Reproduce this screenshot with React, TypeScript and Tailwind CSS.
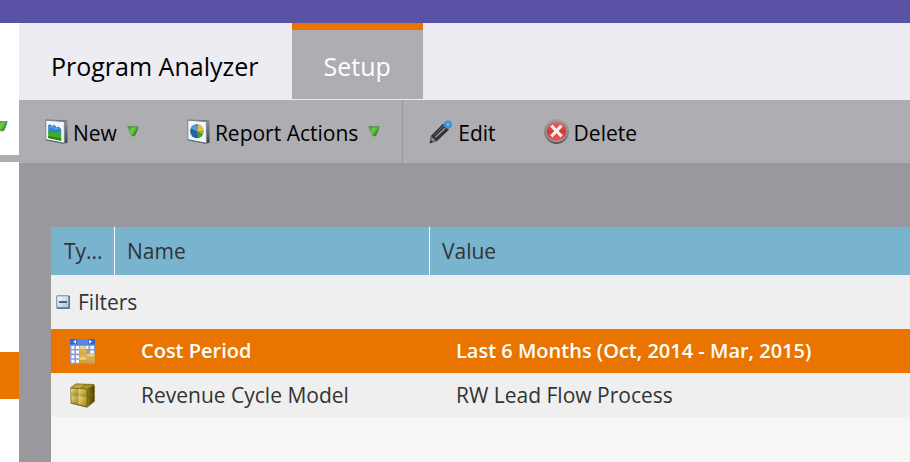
import { useState } from "react";
import type { ReactNode } from "react";
import { clsx } from "clsx";

const rows = [
  {
    id: "cost",
    icon: <CalendarIcon />,
    name: "Cost Period",
    value: "Last 6 Months (Oct, 2014 - Mar, 2015)",
  },
  {
    id: "model",
    icon: <CubeIcon />,
    name: "Revenue Cycle Model",
    value: "RW Lead Flow Process",
  },
];

function Caret() {
  return (
    <svg viewBox="0 0 12 11" className="h-[11px] w-3 shrink-0" aria-hidden="true">
      <defs>
        <linearGradient id="caret" x1="0" y1="0" x2="1" y2="0.6">
          <stop offset="0" stopColor="#2f8f16" />
          <stop offset="0.5" stopColor="#6fd04a" />
          <stop offset="1" stopColor="#23790f" />
        </linearGradient>
      </defs>
      <path d="M.6.6h10.8L7.4 10H4.6z" fill="url(#caret)" stroke="#5f9a52" strokeWidth="0.6" />
      <path d="M1.2.8h9.6" stroke="#4a8a3c" strokeWidth="0.8" />
      <path d="M6.4 9.4 8 9 10.6 2.4" fill="none" stroke="#2b6a1b" strokeWidth="0.7" />
    </svg>
  );
}

function PanelFrame({ children }: { children: ReactNode }) {
  return (
    <svg viewBox="0 0 23 25" className="h-[25px] w-[23px] shrink-0" aria-hidden="true">
      <defs>
        <linearGradient id="panel-side" x1="0" y1="0" x2="0" y2="1">
          <stop offset="0" stopColor="#8795a0" />
          <stop offset="1" stopColor="#36444f" />
        </linearGradient>
      </defs>
      <path d="M19 2.5 22.5 1.2v22.6L19 24.6z" fill="url(#panel-side)" />
      <path d="M.5.5 22.5 1.2 19 3 1 1.8z" fill="#66747e" />
      <path d="M.8 1.2 19.4 2.6v21.8L.8 20.8z" fill="#f3f6f8" stroke="#7b8992" strokeWidth="1" />
      <path d="M1 20.9 19.2 24.4" stroke="#55646e" strokeWidth="1" />
      {children}
    </svg>
  );
}

function ChartIcon() {
  return (
    <PanelFrame>
      <path d="M3.2 6 5.4 5.2 7 7.2 9.2 5.4 11.4 8.6 13.8 7.6 16.2 10.4v4H3.2z" fill="#2f80cf" />
      <path d="M4.2 7.8 6.4 9 8 7.8 10 10.4 13 9.4" fill="none" stroke="#72b6ee" strokeWidth="1" />
      <path d="M3.2 11.6 5.4 13.2 8 12 10.8 14.6 13.4 11.8 16.2 14.2v7.6L3.2 19z" fill="#3fae25" />
      <path d="M3.2 17 16.2 19.4v2.4L3.2 19z" fill="#23850f" />
    </PanelFrame>
  );
}

function PieIcon() {
  return (
    <PanelFrame>
      <ellipse cx="9.8" cy="12.2" rx="6.6" ry="7" fill="#25649f" />
      <path d="M9.8 12.2V6A6.6 6.6 0 0 0 4.4 9.4z" fill="#5b9fd4" />
      <path d="M10 12.2 11 5.2a6.9 6.9 0 0 1 5.6 7z" fill="#e0c33f" />
      <path d="M9.8 12.2h6.6a6.6 7 0 0 1-5.4 6.9z" fill="#4d9c2b" />
      <path d="M9.8 12.2h6.6L15.9 15z" fill="#a8bf35" />
    </PanelFrame>
  );
}

function PencilIcon() {
  return (
    <svg viewBox="0 0 24 24" className="size-6 shrink-0" aria-hidden="true">
      <path d="M.8 23.2 2 15.8 14 3.8 20 9.8 8 21z" fill="#323234" />
      <path d="M.8 23.2 2 15.8 7.8 21.2z" fill="#66666a" />
      <path d="M5 15.4 15.4 5.2" stroke="#59595c" strokeWidth="1.2" />
      <path d="M6.4 17.4 16 8.2" stroke="#a4a4a8" strokeWidth="1.3" />
      <path d="M2.6 18.4 5 20.6" stroke="#a9a9ad" strokeWidth="1.2" />
      <path d="M.8 23.2 1.4 20.4 3.4 22.4z" fill="#222224" />
      <circle cx="19" cy="4.6" r="4.1" fill="#3a96d8" />
      <circle cx="19" cy="4.4" r="1.4" fill="#69b7ea" />
    </svg>
  );
}

function DeleteIcon() {
  return (
    <svg viewBox="0 0 25 25" className="size-[25px] shrink-0" aria-hidden="true">
      <defs>
        <linearGradient id="delete-ring" x1="0" y1="0" x2="0" y2="1">
          <stop offset="0" stopColor="#a0a2a5" />
          <stop offset="0.6" stopColor="#7d8486" />
          <stop offset="1" stopColor="#48585a" />
        </linearGradient>
        <linearGradient id="delete-fill" x1="0" y1="0" x2="0" y2="1">
          <stop offset="0" stopColor="#d9716d" />
          <stop offset="0.5" stopColor="#d33a37" />
          <stop offset="1" stopColor="#e4605a" />
        </linearGradient>
      </defs>
      <circle cx="12.5" cy="12.5" r="12.4" fill="url(#delete-ring)" />
      <circle cx="12.5" cy="12.3" r="10.8" fill="#98a3a3" />
      <circle cx="12.5" cy="12.3" r="10" fill="url(#delete-fill)" />
      <path d="M7.4 6.6 17.6 17.4M17.4 6.6 7.4 17.4" stroke="#fbeeee" strokeWidth="3.1" />
    </svg>
  );
}

function CalendarIcon() {
  return (
    <svg viewBox="0 0 25 25" className="size-[25px]" aria-hidden="true">
      <path d="M0 0h25v25H0z" fill="#8b9ccb" />
      <path d="M0 0h25v5.6H0z" fill="#2f66dc" />
      <path d="M7 0h11v5.6H7z" fill="#5686ea" />
      <path d="M6 .8v4L3 2.8zM19 .8v4l3-2z" fill="#eef4ff" />
      <path
        d="M1.4 7h3v3h-3zM6 7h3v3H6zM10.6 7h3v3h-3zM15.4 7h3v3h-3zM20.4 7h3.4v3h-3.4zM1.4 11.6h3v3h-3zM6 11.6h3v3H6zM20.4 11.6h3.4v3h-3.4zM1.4 16.2h3v3h-3zM6 16.2h3v3H6zM1.4 20.8h3v3h-3zM6 20.8h3v3H6z"
        fill="#fff"
      />
      <path d="M9.2 8.6h7.4v10H9.2z" fill="#d9a945" />
      <ellipse cx="12.9" cy="8.8" rx="3.8" ry="1.6" fill="#f0cf80" />
      <path d="M16.6 15.6H25v8h-8.4z" fill="#d9a640" />
      <ellipse cx="20.8" cy="16" rx="4.2" ry="1.8" fill="#efcb74" />
      <path d="M9 19.4h7.8V25H9z" fill="#cc942f" />
      <ellipse cx="12.9" cy="19.4" rx="4" ry="1.9" fill="#edc873" />
      <path d="M9.4 12.6h7.2M9.4 15.8h7.2M16.6 20H25M9 22.6h7.8" stroke="#e0b65c" strokeWidth="0.8" />
    </svg>
  );
}

function CubeIcon() {
  return (
    <svg viewBox="0 0 25 25" className="size-[25px]" aria-hidden="true">
      <defs>
        <linearGradient id="cube-front" x1="0" y1="0" x2="1" y2="1">
          <stop offset="0" stopColor="#e8da86" />
          <stop offset="0.6" stopColor="#bca536" />
          <stop offset="1" stopColor="#9c8416" />
        </linearGradient>
        <linearGradient id="cube-side" x1="0" y1="0" x2="1" y2="0">
          <stop offset="0" stopColor="#8f7914" />
          <stop offset="1" stopColor="#4e420a" />
        </linearGradient>
      </defs>
      <path d="M.4 4.6 6 .5 23.8 1 24.8 3v15.6L17 24.8.6 20.4z" fill="#78671a" />
      <path d="M1.4 4.4 6.4 1.2 14.6 1.4 10 5.2z" fill="#bda93c" />
      <path d="M11 5.2 15.4 1.4 23.4 1.8 17.2 6z" fill="#a89224" />
      <path d="M1 5.4 8.2 5.9v6.7L1 11.8z" fill="url(#cube-front)" />
      <path d="M9 6 16.6 6.7v6.9L9 12.7z" fill="url(#cube-front)" />
      <path d="M1.2 12.9 8.2 13.7v7.5l-6.8-1.7z" fill="url(#cube-front)" />
      <path d="M9 13.8 16.6 14.8v8.8L9 21.5z" fill="url(#cube-front)" />
      <path d="M17.6 6.8 24 2.8v7.4l-6.4 3.6z" fill="url(#cube-side)" />
      <path d="M17.6 15 24 11.4v6.8l-6.4 5.2z" fill="url(#cube-side)" />
      <path d="M8.6 5.9v15.2M1.2 12.3 16.8 14.2" stroke="#e3d893" strokeWidth="0.7" />
    </svg>
  );
}

function CollapseIcon() {
  return (
    <svg viewBox="0 0 14 14" className="size-3.5 shrink-0" aria-hidden="true">
      <defs>
        <linearGradient id="collapse" x1="0" y1="0" x2="1" y2="1">
          <stop offset="0" stopColor="#ffffff" />
          <stop offset="1" stopColor="#a9b9cf" />
        </linearGradient>
      </defs>
      <rect x="0.7" y="0.7" width="12.6" height="12.6" rx="1.4" fill="url(#collapse)" stroke="#8ba3c4" strokeWidth="1.4" />
      <path d="M1 13.2h12.2V1" fill="none" stroke="#4a6388" strokeWidth="1.2" />
      <path d="M3 7h8" stroke="#223a5e" strokeWidth="1.5" />
    </svg>
  );
}

function Sidebar() {
  return (
    <aside className="flex w-[19px] shrink-0 flex-col overflow-hidden bg-white">
      <div className="flex h-[139px] justify-end border-b-7 border-[#aeadb2] pt-[98px] pr-[11px]">
        <button type="button" aria-label="Expand menu" className="h-[11px]">
          <Caret />
        </button>
      </div>
      <div className="mt-[190px] h-[47px] bg-[#e97500]" />
    </aside>
  );
}

type ToolbarButtonProps = {
  icon: ReactNode;
  label: string;
  menu?: boolean;
};

function ToolbarButton({ icon, label, menu }: ToolbarButtonProps) {
  return (
    <button type="button" className="flex items-center gap-[10px]">
      <span className="flex items-center gap-[5px]">
        {icon}
        <span className="pt-1">{label}</span>
      </span>
      {menu && <Caret />}
    </button>
  );
}

function Toolbar() {
  return (
    <div className="flex h-[63px] shrink-0 items-stretch bg-[#aeadb2] text-[21px] whitespace-nowrap text-black">
      <div className="flex gap-12 border-r border-[#99989d] pr-[22px] pl-[26px]">
        <ToolbarButton icon={<ChartIcon />} label="New" menu />
        <ToolbarButton icon={<PieIcon />} label="Report Actions" menu />
      </div>
      <div className="flex gap-12 pl-[26px]">
        <ToolbarButton icon={<PencilIcon />} label="Edit" />
        <ToolbarButton icon={<DeleteIcon />} label="Delete" />
      </div>
    </div>
  );
}

function SettingsTable() {
  const [selected, setSelected] = useState("cost");
  const [open, setOpen] = useState(true);

  return (
    <table className="w-full table-fixed border-separate border-spacing-0 text-left text-[21px] leading-7 whitespace-nowrap text-[#333]">
      <colgroup>
        <col className="w-16" />
        <col className="w-[315px]" />
        <col />
      </colgroup>
      <thead>
        <tr className="h-12 bg-[#79b4cf]">
          <th className="border-r border-white p-0 pl-[13px] font-normal">Ty...</th>
          <th className="border-r border-white p-0 pl-3 font-normal">Name</th>
          <th className="p-0 pl-3 font-normal">Value</th>
        </tr>
      </thead>
      <tbody>
        <tr className="h-[54px] bg-[#efefef]">
          <td colSpan={3} className="p-0 pl-[5px]">
            <button
              type="button"
              aria-expanded={open}
              onClick={() => setOpen(!open)}
              className="flex items-center gap-2"
            >
              <CollapseIcon />
              Filters
            </button>
          </td>
        </tr>
        {open &&
          rows.map((row) => (
            <tr
              key={row.id}
              onClick={() => setSelected(row.id)}
              className={clsx(
                "h-[44px]",
                selected === row.id
                  ? "bg-[#e97500] text-[20px] font-semibold text-white"
                  : "bg-[#efefef]",
              )}
            >
              <td className="p-0 pl-[19px]">{row.icon}</td>
              <td className="p-0 pl-[26px]">{row.name}</td>
              <td className="p-0 pl-[26px]">{row.value}</td>
            </tr>
          ))}
      </tbody>
    </table>
  );
}

export default function App() {
  return (
    <div className="flex min-h-screen flex-col overflow-hidden bg-white font-['Open_Sans',sans-serif]">
      <header className="h-[23px] shrink-0 bg-[#5a52a5]" />
      <div className="flex flex-1">
        <Sidebar />
        <main className="flex min-w-0 flex-1 flex-col bg-[#99989d]">
          <div
            role="tablist"
            className="flex h-[77px] shrink-0 bg-[#edecf2] pb-px text-[25px] whitespace-nowrap"
          >
            <button
              type="button"
              role="tab"
              aria-selected="false"
              className="border-t-7 border-transparent pt-1 pr-[34px] pl-8 text-black"
            >
              Program Analyzer
            </button>
            <button
              type="button"
              role="tab"
              aria-selected="true"
              className="border-t-7 border-[#e97500] bg-[#aeadb2] pt-1 pr-8 pl-[31px] text-white"
            >
              Setup
            </button>
          </div>
          <Toolbar />
          <section className="flex flex-1 flex-col pt-16 pl-8">
            <div className="flex-1 bg-[#f6f6f6]">
              <SettingsTable />
            </div>
          </section>
        </main>
      </div>
    </div>
  );
}
